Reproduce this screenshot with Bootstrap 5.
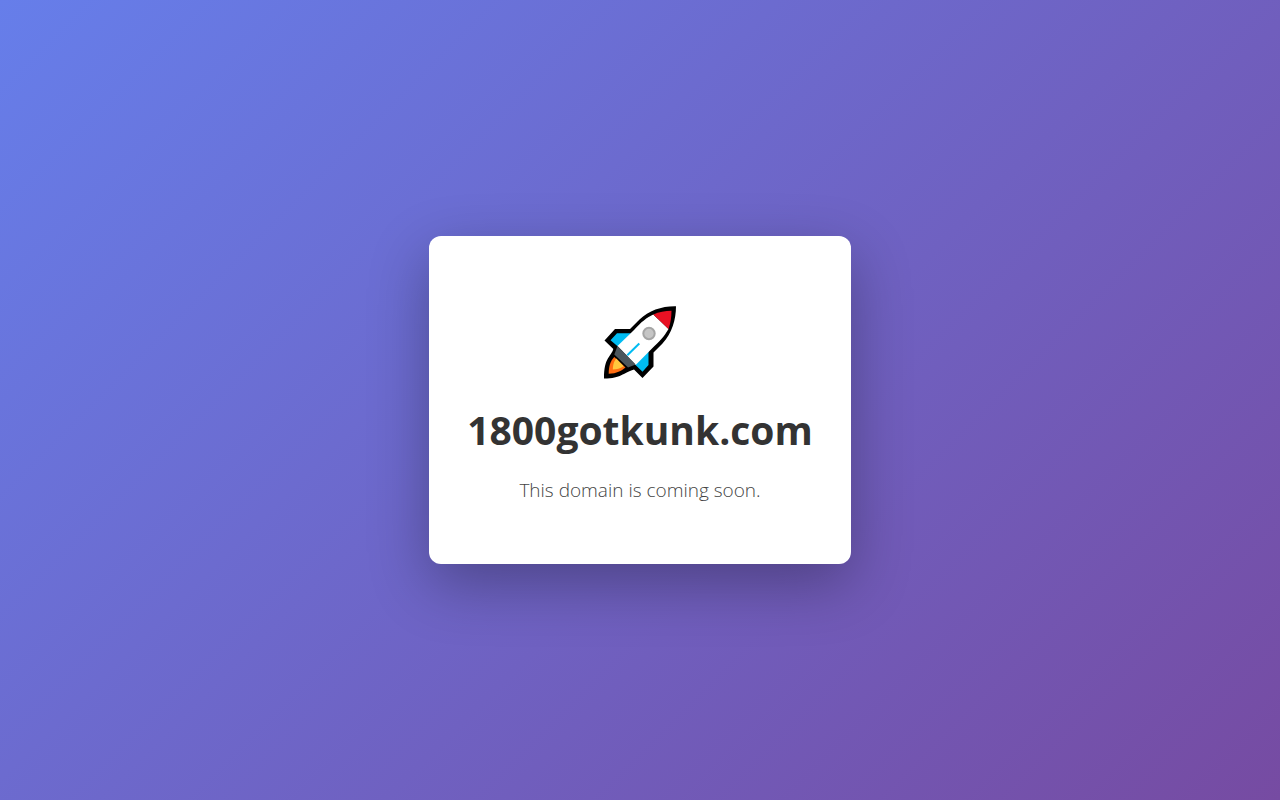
<!DOCTYPE html>
<html lang="en">
<head>
<meta charset="utf-8">
<meta name="viewport" content="width=device-width, initial-scale=1">
<title>1800gotkunk.com</title>
<link href="https://cdn.jsdelivr.net/npm/bootstrap@5.3.0/dist/css/bootstrap.min.css" rel="stylesheet">
<style>
body{font-family:"Open Sans","Noto Sans",sans-serif;background:linear-gradient(135deg,#667eea 0%,#764ba2 100%)}
.notice{padding:60px 38px;border-radius:12px;box-shadow:0 20px 60px rgba(0,0,0,.3)}
.rocket{width:80px;height:92px}
.domain{font-size:39px;line-height:52px;margin-bottom:20px;color:#333}
.lead-text{font-size:19px;line-height:28px;font-weight:300;color:#444}
</style>
</head>
<body class="min-vh-100 d-flex align-items-center justify-content-center">
<main class="notice bg-white text-center">
<svg class="rocket d-block mx-auto mb-3" viewBox="600 296 80 92" aria-hidden="true">
<path fill="#000" d="M676 306.300C662 306 649 310.500 639.500 319.500L630 329H615L604.500 340.500L613.300 349C611 357 604 357 604 378.500C622 378.500 622 373 634 369.500L642.500 378L653.500 366.500V352.500L662.500 343.500C672 333 676 320 676 306.300Z"/>
<path fill="#00bcf2" d="M617 333.300H631L618.500 347L610.500 340.200ZM648.500 351V365L642.500 371.800L635 364.500Z"/>
<path fill="#fff" d="M617.500 346L634 330C641 322 647 317.500 653.300 314.500L668.500 329C664 337 659 342 652 348.500L635.700 365Z"/>
<path fill="#e81123" d="M653.300 314.500C659 312 665 311 671.500 310.800C671.300 317 671 322 668.500 329Z"/>
<path fill="#4c565c" d="M617.500 346L635.700 364.500L628 367.600L614.300 354.500Z"/>
<path fill="#ff6d12" d="M614.300 357L625.500 367.500C621 371 617 373.500 608.700 373.800C608.700 367 610 361.500 614.300 357Z"/>
<path fill="#ffc83d" d="M616.300 358.500L623.700 366.300C620 368.500 617 369.500 612.800 369.600C613 364 614 361.500 616.300 358.500Z"/>
<path stroke="#00bcf2" stroke-width="2" d="M627.300 355.300L639.300 343.500"/>
<circle cx="649" cy="333.500" r="5.700" fill="#c5c5c5" stroke="#a5a5a5" stroke-width="2"/>
</svg>
<h1 class="domain fw-bold">1800gotkunk.com</h1>
<p class="lead-text mb-0">This domain is coming soon.</p>
</main>
<script src="https://cdn.jsdelivr.net/npm/bootstrap@5.3.0/dist/js/bootstrap.bundle.min.js"></script>
</body>
</html>
